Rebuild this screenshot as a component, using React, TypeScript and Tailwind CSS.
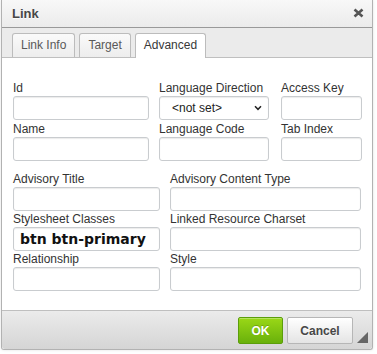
import React from "react";

const inputCls =
  "h-[24px] border border-[#c9cccf] rounded-[3px] bg-white shadow-[inset_0_1px_1px_rgba(0,0,0,0.08)]";
const labelCls = "h-[16px] leading-[16px] text-[12px] text-[#333]";

function Field({ label, w, children }: { label: string; w: string; children?: React.ReactNode }) {
  return (
    <div className="flex flex-col">
      <div className={labelCls + " whitespace-nowrap"}>{label}</div>
      {children ? children : <div className={inputCls + " " + w} />}
    </div>
  );
}

export default function App() {
  return (
    <div className="w-[377px] h-[354px] bg-white font-['Liberation_Sans',Arial,sans-serif] overflow-hidden">
      <div className="ml-[1px] w-[372px] border-l border-r border-b border-[#b2b2b2] rounded-b-[3px] shadow-[0_0_3px_rgba(0,0,0,0.12)] flex flex-col">
        {/* Title */}
        <div className="h-[28px] border-b border-[#999] bg-[linear-gradient(#f8f8f8,#ebebeb)] flex items-center justify-between pl-[10px] pr-[8px]">
          <span className="text-[13px] font-bold text-[#474747] [text-shadow:0_1px_0_rgba(255,255,255,0.75)]">Link</span>
          <svg width="11" height="10" viewBox="0 0 11 10" className="mt-[-1px]">
            <path d="M1.5 1.5 L9.5 8.5 M9.5 1.5 L1.5 8.5" stroke="#555" strokeWidth="2.6" strokeLinecap="butt" />
          </svg>
        </div>
        {/* Tabs */}
        <div className="h-[30px] bg-[#ebebeb] border-b border-[#bfbfbf] pt-[5px] pl-[10px] flex items-start gap-[4px]">
          <div className="h-[24px] px-[8px] border border-b-0 border-[#bcbcbc] rounded-t-[3px] bg-[linear-gradient(#fafafa,#ededed)] text-[12px] leading-[22px] text-[#595959]">
            Link Info
          </div>
          <div className="h-[24px] px-[8px] border border-b-0 border-[#bcbcbc] rounded-t-[3px] bg-[linear-gradient(#fafafa,#ededed)] text-[12px] leading-[22px] text-[#595959]">
            Target
          </div>
          <div className="h-[25px] px-[8px] border border-b-0 border-[#bcbcbc] rounded-t-[3px] bg-white text-[12px] leading-[22px] text-[#383838] relative z-10">
            Advanced
          </div>
        </div>
        {/* Content */}
        <div className="h-[252px] bg-white pt-[22px] pl-[11px]">
          <div className="flex flex-col gap-[1px]">
            <div className="flex">
              <Field label="Id" w="w-[136px]" />
              <div className="ml-[10px]">
                <Field label="Language Direction" w="">
                  <div className={inputCls + " w-[110px] flex items-center justify-between pl-[12px] pr-[6px] text-[12px] text-[#222]"}>
                    <span>&lt;not set&gt;</span>
                    <svg width="8" height="6" viewBox="0 0 8 6">
                      <path d="M1 1.2 L4 4.3 L7 1.2" stroke="#222" strokeWidth="1.5" fill="none" />
                    </svg>
                  </div>
                </Field>
              </div>
              <div className="ml-[12px]">
                <Field label="Access Key" w="w-[81px]" />
              </div>
            </div>
            <div className="flex">
              <Field label="Name" w="w-[136px]" />
              <div className="ml-[10px]">
                <Field label="Language Code" w="w-[110px]" />
              </div>
              <div className="ml-[12px]">
                <Field label="Tab Index" w="w-[81px]" />
              </div>
            </div>
          </div>
          <div className="mt-[10px] flex flex-col">
            <div className="flex">
              <Field label="Advisory Title" w="w-[147px]" />
              <div className="ml-[10px]">
                <Field label="Advisory Content Type" w="w-[191px]" />
              </div>
            </div>
            <div className="flex">
              <Field label="Stylesheet Classes" w="">
                <div className={inputCls + " w-[147px] flex items-center pl-[6px] font-['DejaVu_Sans',sans-serif] font-bold text-[14px] text-[#111] whitespace-nowrap"}>
                  btn btn-primary
                </div>
              </Field>
              <div className="ml-[10px]">
                <Field label="Linked Resource Charset" w="w-[191px]" />
              </div>
            </div>
            <div className="flex">
              <Field label="Relationship" w="w-[147px]" />
              <div className="ml-[10px]">
                <Field label="Style" w="w-[191px]" />
              </div>
            </div>
          </div>
        </div>
        {/* Footer */}
        <div className="h-[39px] border-t border-[#bfbfbf] bg-[linear-gradient(#ebebeb,#d5d5d5)] flex justify-end items-start pt-[6px] pr-[4px] rounded-b-[3px]">
          <div className="h-[27px] w-[45px] border border-[#5b9e0a] rounded-[2px] bg-[linear-gradient(#9ad717,#69b10b)] flex items-center justify-center text-[12px] font-bold text-white [text-shadow:0_-1px_0_rgba(0,0,0,0.2)] shadow-[inset_0_1px_0_rgba(255,255,255,0.3)]">
            OK
          </div>
          <div className="ml-[4px] h-[27px] w-[66px] border border-[#b6b6b6] rounded-[2px] bg-[linear-gradient(#ffffff,#e4e4e4)] flex items-center justify-center text-[12px] font-bold text-[#474747] [text-shadow:0_1px_0_rgba(255,255,255,0.5)]">
            Cancel
          </div>
          <svg width="11" height="11" viewBox="0 0 11 11" className="ml-[4px] mt-[15px]">
            <path d="M11 0 L11 11 L0 11 Z" fill="#666" />
            <path d="M11 0 L0 11" stroke="#999" strokeWidth="0.8" />
          </svg>
        </div>
      </div>
    </div>
  );
}
